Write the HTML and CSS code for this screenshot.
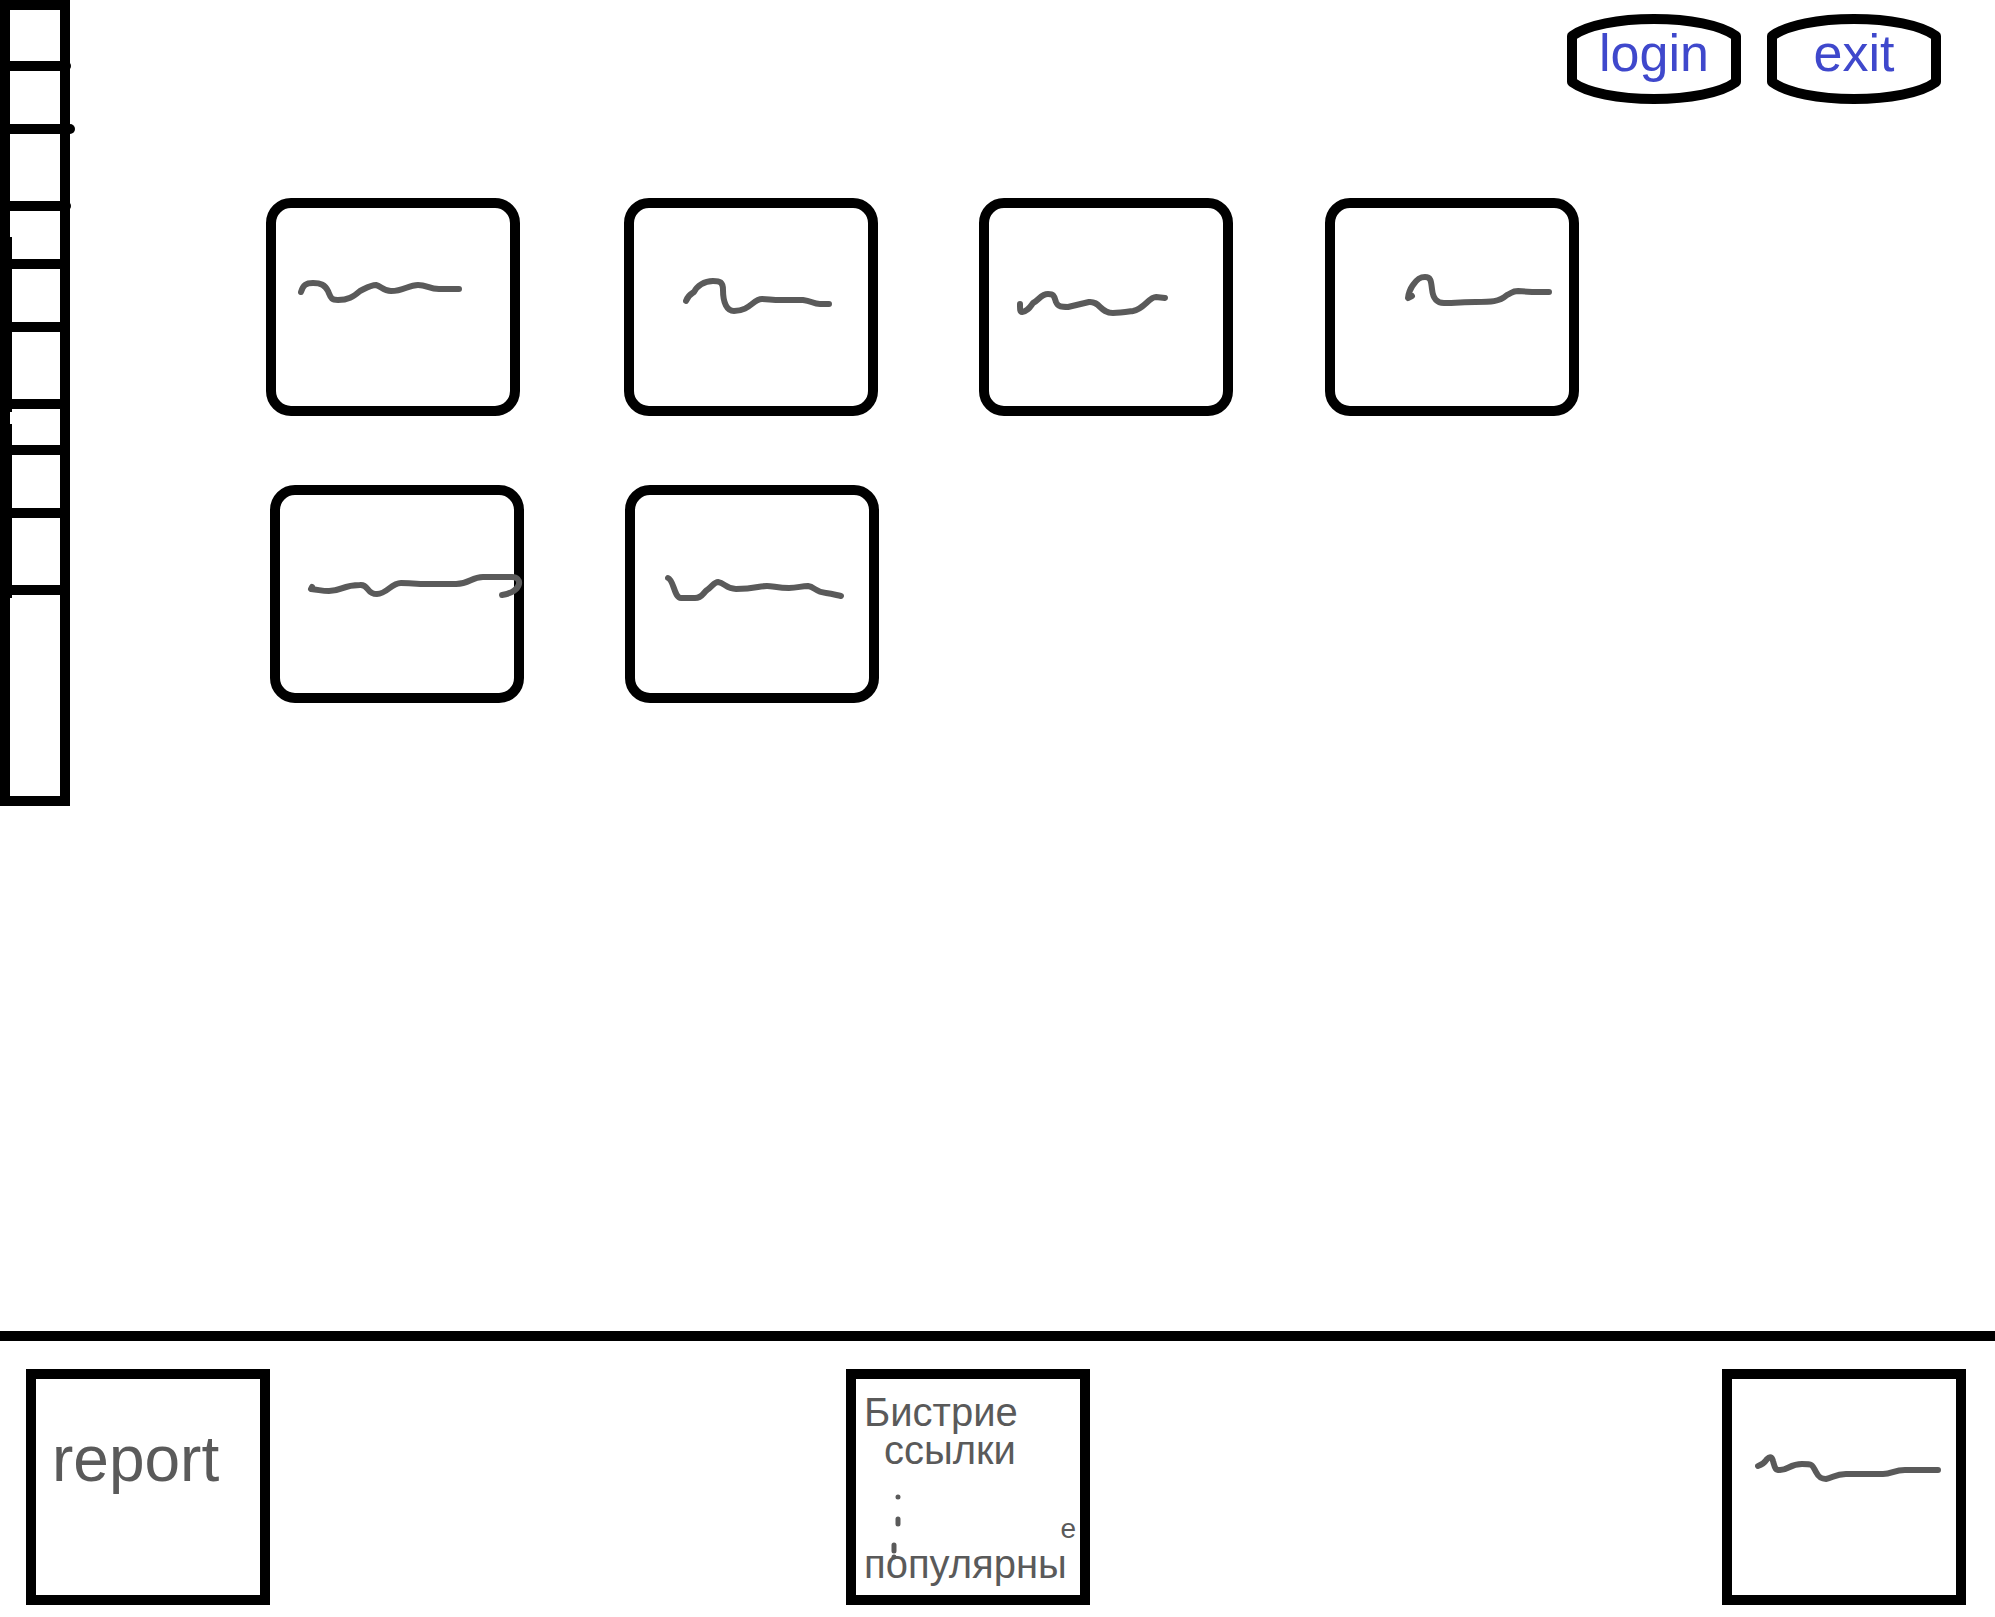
FILE: index.html
```html
<!DOCTYPE html>
<html lang="ru">
<head>
<meta charset="utf-8">
<meta name="viewport" content="width=device-width, initial-scale=1">
<title>Wireframe</title>
<link rel="stylesheet" href="styles.css">
</head>
<body>
<div class="page">
  <nav class="sidebar" aria-label="Menu">
    <ul class="menu">
      <li class="cell cell-first nub-s"></li>
      <li class="cell cell-m nub-l"></li>
      <li class="cell cell-l nub-s"></li>
      <li class="cell cell-s thick-end"></li>
      <li class="cell cell-m thick"></li>
      <li class="cell cell-l thick"></li>
      <li class="cell cell-xs thick-gap"></li>
      <li class="cell cell-m thick"></li>
      <li class="cell cell-l thick"></li>
      <li class="cell cell-xl thick-start"></li>
    </ul>
  </nav>
  <div class="content">
    <header class="topbar">
      <button class="pill" type="button">
        <svg class="pill-shape" viewBox="0 0 174 90" aria-hidden="true"><path d="M5 22C20 11 52 5 87 5S154 11 169 22V68C154 79 122 85 87 85S20 79 5 68Z"/></svg>
        <span class="pill-label">login</span>
      </button>
      <button class="pill" type="button">
        <svg class="pill-shape" viewBox="0 0 174 90" aria-hidden="true"><path d="M5 22C20 11 52 5 87 5S154 11 169 22V68C154 79 122 85 87 85S20 79 5 68Z"/></svg>
        <span class="pill-label">exit</span>
      </button>
    </header>
    <main class="board">
      <div class="row row-first">
        <article class="card"><svg class="scribble" viewBox="0 0 254 218" aria-hidden="true"><path d="M35 94C37 87 40 85 47 85C55 85 59 87 62 93C65 100 65 102 72 102C82 102 87 99 94 93C102 89 105 87 110 87C115 88 117 93 125 93C138 93 142 87 152 87C161 87 163 91 173 91H193"/></svg></article>
        <article class="card"><svg class="scribble" viewBox="0 0 254 218" aria-hidden="true"><path d="M62 103C64 97 67 96 70 94C73 88 80 83 89 83C96 83 99 84 99 92C99 105 103 113 110 113C126 113 129 101 138 101C144 101 148 102 157 102H179C188 103 189 106 196 106H205"/></svg></article>
        <article class="card"><svg class="scribble" viewBox="0 0 254 218" aria-hidden="true"><path d="M41 106C41 112 41 114 43 114C49 113 51 109 54 105C60 102 62 96 69 96C75 96 75 98 77 104C79 109 83 109 89 109L110 104C121 103 121 115 134 115C141 115 147 114 154 113C165 111 170 99 177 99L186 100"/></svg></article>
        <article class="card"><svg class="scribble" viewBox="0 0 254 218" aria-hidden="true"><path d="M87 98L83 100C84 92 86 90 88 87C92 81 95 79 100 79C106 79 106 83 107 91C108 101 112 105 119 105C131 105 139 104 150 104C166 104 174 104 182 97C187 95 187 93 193 93L207 94H224"/></svg></article>
      </div>
      <div class="row row-second">
        <article class="card"><svg class="scribble" viewBox="0 0 254 218" aria-hidden="true"><path d="M42 102L41 104C50 105 52 106 59 106C72 106 72 100 90 100C99 99 96 109 107 109C117 109 121 98 131 98C139 98 147 99 156 99H186C200 99 201 92 213 92H241C253 91 253 107 232 110"/></svg></article>
        <article class="card"><svg class="scribble" viewBox="0 0 254 218" aria-hidden="true"><path d="M43 93C49 95 49 113 56 113H70C77 113 78 108 82 105C87 102 89 97 93 97C100 98 101 104 111 104C131 104 133 101 142 101C148 101 153 103 164 103C173 103 176 101 183 101C190 102 190 107 201 108C208 109 211 110 216 111"/></svg></article>
      </div>
    </main>
  </div>
</div>
<footer class="footer">
  <section class="box box-report"><p class="report">report</p></section>
  <section class="box box-links">
    <p class="line">Бистрие</p>
    <p class="line line-indent">ссылки</p>
    <div class="dots-row">
      <svg class="dots" width="16" height="76" viewBox="0 0 16 76" aria-hidden="true"><path d="M10 28V28M10 50V55M6 76V82M6 88V88"/></svg>
      <span class="above">е</span>
    </div>
    <p class="line">популярны</p>
  </section>
  <section class="box"><svg class="scribble" viewBox="0 0 244 236" aria-hidden="true"><path d="M36 97C42 95 43 93 45 90C48 87 50 88 51 92C53 99 53 101 58 101C66 101 68 95 80 95C90 95 90 95 94 103C97 109 100 110 104 110C111 109 113 105 124 105H161C170 105 172 101 183 101H216"/></svg></section>
</footer>
</body>
</html>
```
FILE: styles.css
```css
* {
  box-sizing: border-box;
}

body {
  margin: 0;
  min-height: 100vh;
  display: flex;
  flex-direction: column;
  background: #fff;
  color: #5a5a5a;
  font-family: "Liberation Sans", Arial, sans-serif;
}

p {
  margin: 0;
}

.page {
  flex: 1;
  display: flex;
  align-items: flex-start;
}

/* Left menu strip */
.sidebar {
  flex: none;
  width: 70px;
  border: 10px solid #000;
}

.menu {
  margin: 0;
  padding: 0;
  list-style: none;
}

.cell {
  position: relative;
  border-bottom: 10px solid #000;
  background-repeat: no-repeat;
}

.cell:last-child {
  border-bottom: 0;
}

.cell-xs { height: 46px; }
.cell-s { height: 58px; }
.cell-first { height: 61px; }
.cell-m { height: 63px; }
.cell-l { height: 77px; }
.cell-xl { height: 201px; }

.thick,
.thick-end,
.thick-start,
.thick-gap {
  background-image: linear-gradient(#000, #000);
  background-size: 2px 100%;
}

.thick-end {
  background-size: 2px 22px;
  background-position: left bottom;
}

.thick-start {
  background-size: 2px 3px;
}

.thick-gap {
  background-image: linear-gradient(#000 3px, transparent 3px, transparent 15px, #000 15px);
}

.nub-s::after,
.nub-l::after {
  content: "";
  position: absolute;
  right: -11px;
  bottom: -10px;
  width: 10px;
  height: 10px;
  border-radius: 5px;
  background: #000;
}

.nub-l::after {
  right: -15px;
}

/* Header buttons */
.content {
  flex: 1;
  min-width: 0;
}

.topbar {
  display: flex;
  justify-content: flex-end;
  gap: 26px;
  padding: 14px 54px 0 0;
}

.pill {
  display: grid;
  place-items: center;
  width: 174px;
  height: 90px;
  padding: 0;
  border: 0;
  background: none;
  color: #3f48cc;
  font: 52px/56px "Liberation Sans", Arial, sans-serif;
  cursor: pointer;
}

.pill-shape,
.pill-label {
  grid-area: 1 / 1;
}

.pill-shape {
  width: 174px;
  height: 90px;
  fill: #fff;
  stroke: #000;
  stroke-width: 10;
  stroke-linejoin: round;
}

.pill-label {
  z-index: 1;
  padding-bottom: 12px;
}

/* Cards */
.board {
  display: flex;
  flex-direction: column;
  gap: 69px;
  padding: 94px 0 48px;
}

.row {
  display: grid;
}

.row-first {
  margin-left: 196px;
  grid-template-columns: 358fr 355fr 346fr 670fr;
}

.row-second {
  margin-left: 200px;
  grid-template-columns: 355fr 1370fr;
}

.card {
  width: 254px;
  height: 218px;
  border: 10px solid #000;
  border-radius: 25px;
}

.scribble {
  display: block;
  margin: -10px;
  overflow: visible;
  fill: none;
  stroke: #5a5a5a;
  stroke-width: 6;
  stroke-linecap: round;
  stroke-linejoin: round;
}

.card .scribble {
  width: 254px;
  height: 218px;
}

.box .scribble {
  width: 244px;
  height: 236px;
}

/* Footer */
.footer {
  display: grid;
  grid-template-columns: 820fr 876fr 244px;
  padding: 28px 29px 12px 26px;
  border-top: 10px solid #000;
}

.box {
  width: 244px;
  height: 236px;
  border: 10px solid #000;
}

.box-report {
  padding: 44px 16px 0;
}

.report {
  font-size: 64px;
  line-height: 72px;
}

.box-links {
  padding: 14px 0 0 8px;
}

.line {
  font-size: 40px;
  line-height: 38px;
  white-space: nowrap;
}

.line-indent {
  padding-left: 20px;
}

.dots-row {
  display: flex;
  justify-content: space-between;
  align-items: flex-end;
  height: 76px;
  padding: 0 4px 0 24px;
}

.dots {
  overflow: visible;
  fill: none;
  stroke: #5a5a5a;
  stroke-width: 5;
  stroke-linecap: round;
}

.above {
  font-size: 28px;
  line-height: 32px;
}
```
